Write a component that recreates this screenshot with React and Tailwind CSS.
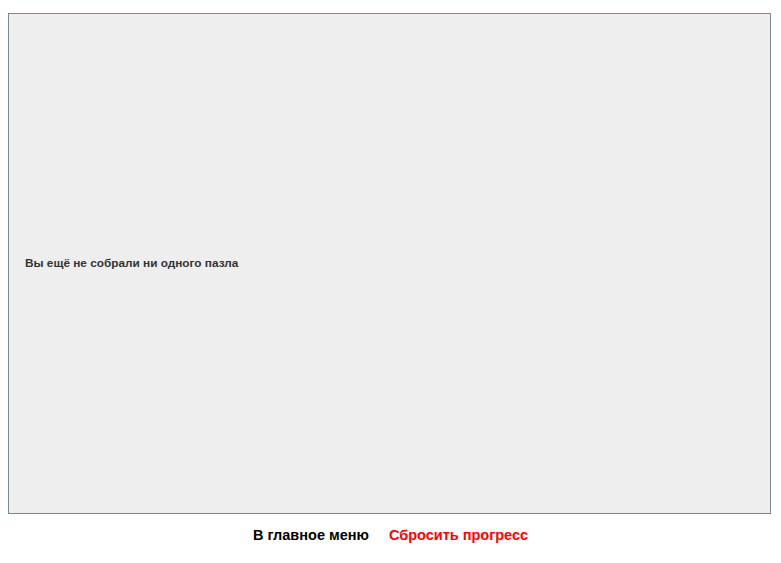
import React from "react";

export default function App() {
  return (
    <div className="min-h-screen bg-white px-2 pt-[13px] font-['Liberation_Sans',Arial,sans-serif]">
      {/* Puzzles panel */}
      <div className="flex h-[501px] w-[763px] items-center border border-[#778899] bg-[#eeeeee] px-4">
        <p className="text-[11.8px] font-bold text-[#333333]">
          Вы ещё не собрали ни одного пазла
        </p>
      </div>

      {/* Footer links */}
      <div className="mt-[13px] flex justify-center gap-5 text-[14.5px] font-bold leading-4">
        <a href="#menu" className="text-black">
          В главное меню
        </a>
        <a href="#reset" className="text-[#ff0000]">
          Сбросить прогресс
        </a>
      </div>
    </div>
  );
}
